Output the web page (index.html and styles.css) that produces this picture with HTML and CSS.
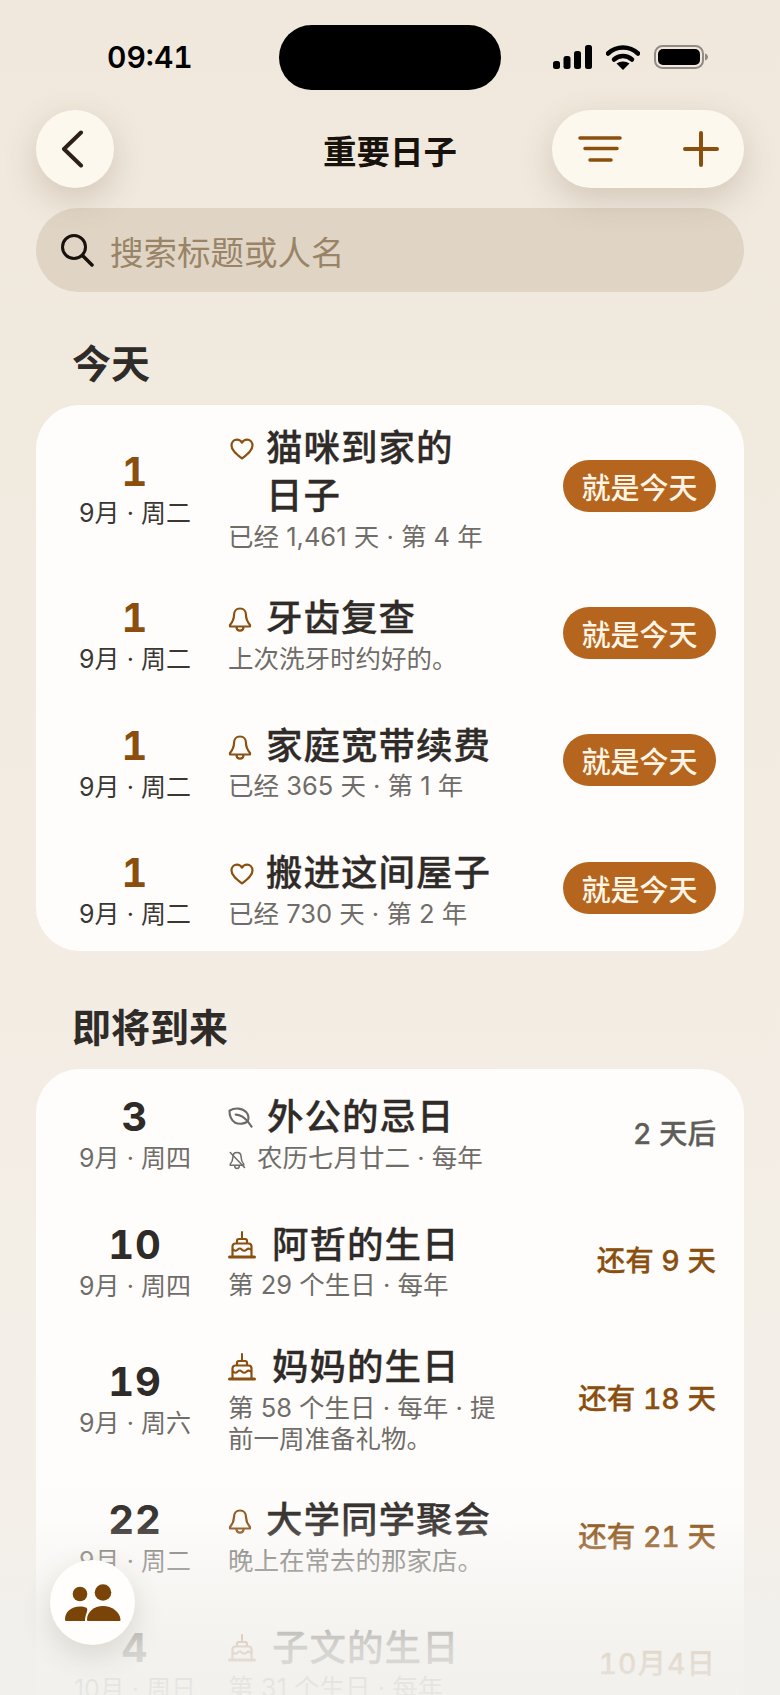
FILE: index.html
```html
<!DOCTYPE html>
<html lang="zh-CN">
<head>
    <meta charset="UTF-8">
    <meta name="viewport" content="width=device-width, initial-scale=1.0">
    <title>重要日子</title>
    <link rel="stylesheet" href="styles.css">
</head>
<body>
    <svg class="defs" width="0" height="0">
        <symbol id="i-heart" viewBox="0 0 24 22">
            <path d="M12 20.500C7 16.600 1.500 12.600 1.500 7.400 1.500 4 4 1.600 7 1.600c2.100 0 3.900 1.100 5 3 1.100-1.900 2.900-3 5-3 3 0 5.500 2.400 5.500 5.800 0 5.200-5.500 9.200-10.500 13.100Z" fill="none" stroke="currentColor" stroke-width="2.200" stroke-linejoin="round"/>
        </symbol>
        <symbol id="i-bell" viewBox="0 0 24 26">
            <path d="M12 2.500c-3.800 0-6 3-6 6.500 0 4.500-1.500 7-4 10v1.500h20V19c-2.500-3-4-5.500-4-10 0-3.500-2.200-6.500-6-6.500Z" fill="none" stroke="currentColor" stroke-width="2.200" stroke-linejoin="round"/>
            <path d="M8.500 21c0 2.200 1.500 3.600 3.500 3.600s3.500-1.400 3.500-3.600" fill="none" stroke="currentColor" stroke-width="2.200"/>
        </symbol>
        <symbol id="i-bell-off" viewBox="0 0 24 26">
            <path d="M12 3c-3.500 0-5.500 2.800-5.500 6.200 0 4.300-1.500 6.800-3.500 9.300v1.500h18v-1.500c-2-2.500-3.500-5-3.500-9.300C17.500 5.800 15.500 3 12 3Z" fill="none" stroke="currentColor" stroke-width="2" stroke-linejoin="round"/>
            <path d="M9 21c0 2 1.300 3.200 3 3.200s3-1.200 3-3.200M3 3l19 20" fill="none" stroke="currentColor" stroke-width="2" stroke-linecap="round"/>
        </symbol>
        <symbol id="i-leaf" viewBox="0 0 26 24">
            <path d="M1.500 5.500C7 2 15 2.500 19 7c2.500 3 2.800 6.500 1.500 9.500-3 2.500-8.500 3.500-13 1.500C3.500 15.500 1.500 10.500 1.500 5.500Z" fill="none" stroke="currentColor" stroke-width="2.200" stroke-linejoin="round"/>
            <path d="M8 9.500c4 0 8.500 2.500 12.500 7 1.500 2 2.800 3.700 4 5.500" fill="none" stroke="currentColor" stroke-width="2.200" stroke-linecap="round"/>
        </symbol>
        <symbol id="i-cake" viewBox="0 0 28 28">
            <path d="M14 1v6" stroke="currentColor" stroke-width="2" stroke-linecap="round"/>
            <path d="M9 12.500V10c0-1 .8-2 1.800-2h6.400c1 0 1.800 1 1.800 2v2.500M4.500 25V15.500c0-1.700 1.300-3 3-3h13c1.700 0 3 1.300 3 3V25" fill="none" stroke="currentColor" stroke-width="2.200"/>
            <path d="M4.500 18c2 2.200 3.500 2.200 5 .7s3-1.500 4.500 0 3 1.500 4.500 0 3-1.500 5 .3" fill="none" stroke="currentColor" stroke-width="2"/>
            <path d="M1.500 26h25" stroke="currentColor" stroke-width="3" stroke-linecap="round"/>
        </symbol>
    </svg>

    <div class="screen">
        <header class="status-bar">
            <span class="time">09:41</span>
            <div class="island"></div>
            <div class="status-icons">
                <svg width="39" height="24" viewBox="0 0 39 24">
                    <rect x="0" y="16" width="7" height="8" rx="2.500"/>
                    <rect x="10.500" y="11" width="7" height="13" rx="2.500"/>
                    <rect x="21" y="6" width="7" height="18" rx="2.500"/>
                    <rect x="32" y="0" width="7" height="24" rx="2.500"/>
                </svg>
                <svg width="34" height="25" viewBox="0 0 34 25">
                    <path d="M2 8.500C10.500 0.500 23.500 0.500 32 8.500" fill="none" stroke="#000" stroke-width="4.500" stroke-linecap="round"/>
                    <path d="M8 14.500c5.200-4.700 12.800-4.700 18 0" fill="none" stroke="#000" stroke-width="4.500" stroke-linecap="round"/>
                    <path d="M17 25l-6.500-6.500c3.800-2.800 9.200-2.800 13 0Z"/>
                </svg>
                <svg width="54" height="24" viewBox="0 0 54 24">
                    <rect x="1" y="1" width="48" height="22" rx="7.500" fill="none" stroke="#8f8c86" stroke-width="2"/>
                    <rect x="4" y="4" width="42" height="16" rx="5"/>
                    <path d="M51 8.500c2 .6 3 2 3 3.500s-1 2.900-3 3.500Z" fill="#8f8c86"/>
                </svg>
            </div>
        </header>

        <nav class="nav-bar">
            <button class="round-btn back-btn">
                <svg width="24" height="38" viewBox="0 0 24 38"><path d="M21 2.500 4 19l17 16.500" fill="none" stroke="#2b2118" stroke-width="4" stroke-linecap="round" stroke-linejoin="round"/></svg>
            </button>
            <h1 class="nav-title">重要日子</h1>
            <div class="round-btn nav-actions">
                <svg width="44" height="26" viewBox="0 0 44 26"><path d="M2 2h40M7 12.500h32M12 24h21" fill="none" stroke="#8a4f0f" stroke-width="3.500" stroke-linecap="round"/></svg>
                <svg width="36" height="36" viewBox="0 0 36 36"><path d="M18 2v32M2 18h32" fill="none" stroke="#8a4f0f" stroke-width="4" stroke-linecap="round"/></svg>
            </div>
        </nav>

        <div class="search-box">
            <svg width="34" height="34" viewBox="0 0 34 34"><circle cx="14" cy="14" r="11.500" fill="none" stroke="#17120c" stroke-width="3"/><path d="M22.500 22.500 32 32" stroke="#17120c" stroke-width="3.500" stroke-linecap="round"/></svg>
            <span class="search-text">搜索标题或人名</span>
        </div>

        <section class="section">
            <h2 class="section-title">今天</h2>
            <div class="card">
                <div class="row today">
                    <div class="date"><div class="day">1</div><div class="label">9月 · 周二</div></div>
                    <div class="main">
                        <div class="title"><svg class="icon heart"><use href="#i-heart"/></svg><span>猫咪到家的<br>日子</span></div>
                        <div class="sub">已经 1,461 天 · 第 4 年</div>
                    </div>
                    <div class="pill">就是今天</div>
                </div>
                <div class="row today">
                    <div class="date"><div class="day">1</div><div class="label">9月 · 周二</div></div>
                    <div class="main">
                        <div class="title"><svg class="icon bell"><use href="#i-bell"/></svg><span>牙齿复查</span></div>
                        <div class="sub">上次洗牙时约好的。</div>
                    </div>
                    <div class="pill">就是今天</div>
                </div>
                <div class="row today">
                    <div class="date"><div class="day">1</div><div class="label">9月 · 周二</div></div>
                    <div class="main">
                        <div class="title"><svg class="icon bell"><use href="#i-bell"/></svg><span>家庭宽带续费</span></div>
                        <div class="sub">已经 365 天 · 第 1 年</div>
                    </div>
                    <div class="pill">就是今天</div>
                </div>
                <div class="row today">
                    <div class="date"><div class="day">1</div><div class="label">9月 · 周二</div></div>
                    <div class="main">
                        <div class="title"><svg class="icon heart"><use href="#i-heart"/></svg><span>搬进这间屋子</span></div>
                        <div class="sub">已经 730 天 · 第 2 年</div>
                    </div>
                    <div class="pill">就是今天</div>
                </div>
            </div>
        </section>

        <section class="section">
            <h2 class="section-title">即将到来</h2>
            <div class="card">
                <div class="row">
                    <div class="date"><div class="day">3</div><div class="label">9月 · 周四</div></div>
                    <div class="main">
                        <div class="title"><svg class="icon leaf"><use href="#i-leaf"/></svg><span>外公的忌日</span></div>
                        <div class="sub"><svg class="icon-small"><use href="#i-bell-off"/></svg>农历七月廿二 · 每年</div>
                    </div>
                    <div class="count muted">2 天后</div>
                </div>
                <div class="row">
                    <div class="date"><div class="day">10</div><div class="label">9月 · 周四</div></div>
                    <div class="main">
                        <div class="title"><svg class="icon cake"><use href="#i-cake"/></svg><span>阿哲的生日</span></div>
                        <div class="sub">第 29 个生日 · 每年</div>
                    </div>
                    <div class="count">还有 9 天</div>
                </div>
                <div class="row">
                    <div class="date"><div class="day">19</div><div class="label">9月 · 周六</div></div>
                    <div class="main">
                        <div class="title"><svg class="icon cake"><use href="#i-cake"/></svg><span>妈妈的生日</span></div>
                        <div class="sub">第 58 个生日 · 每年 · 提前一周准备礼物。</div>
                    </div>
                    <div class="count">还有 18 天</div>
                </div>
                <div class="row">
                    <div class="date"><div class="day">22</div><div class="label">9月 · 周二</div></div>
                    <div class="main">
                        <div class="title"><svg class="icon bell"><use href="#i-bell"/></svg><span>大学同学聚会</span></div>
                        <div class="sub">晚上在常去的那家店。</div>
                    </div>
                    <div class="count">还有 21 天</div>
                </div>
                <div class="row">
                    <div class="date"><div class="day">4</div><div class="label">10月 · 周日</div></div>
                    <div class="main">
                        <div class="title"><svg class="icon cake"><use href="#i-cake"/></svg><span>子文的生日</span></div>
                        <div class="sub">第 31 个生日 · 每年</div>
                    </div>
                    <div class="count far">10月4日</div>
                </div>
            </div>
        </section>

        <div class="bottom-fade"></div>
        <button class="fab">
            <svg width="56" height="37" viewBox="0 0 56 37">
                <circle cx="15" cy="10" r="7.300" fill="#7a4408"/>
                <circle cx="38" cy="8.500" r="8.300" fill="#7a4408"/>
                <path d="M0 35.500C0 28 6 22.500 15 22.500c2.500 0 4.500.4 6.500 1.200C24 26 20 30 20 37H1.500C.5 37 0 36.500 0 35.500Z" fill="#7a4408"/>
                <path d="M22 35.500C22 28 29 22 38 22s17 6 17.500 13.500c0 1-.5 1.500-1.500 1.500H23.500c-1 0-1.500-.5-1.500-1.500Z" fill="#7a4408"/>
            </svg>
        </button>
    </div>
</body>
</html>
```

FILE: styles.css
```css
* {
    box-sizing: border-box;
}
body {
    margin: 0;
    font-family: Inter, "Noto Sans CJK SC", sans-serif;
    color: #2f2b28;
}
.defs {
    position: absolute;
}
.screen {
    position: relative;
    width: 780px;
    height: 1695px;
    padding: 24px 36px 0;
    overflow: hidden;
    background: linear-gradient(to bottom, #f0e8dc, #f2ebe1 40%, #f4f0ea);
}

/* status bar */
.status-bar {
    display: grid;
    grid-template-columns: 1fr 222px 1fr;
    align-items: center;
    height: 66px;
}
.time {
    padding-left: 71px;
    font-size: 30px;
    font-weight: 600;
    font-variant-numeric: tabular-nums;
    color: #000;
}
.island {
    height: 65px;
    border-radius: 33px;
    background: #000;
}
.status-icons {
    display: flex;
    align-items: center;
    gap: 14px;
    padding-left: 52px;
}

/* nav */
.nav-bar {
    display: grid;
    grid-template-columns: 192px 1fr 192px;
    align-items: center;
    margin-top: 20px;
}
.round-btn {
    height: 78px;
    border: none;
    border-radius: 39px;
    background: #fdf8ee;
    box-shadow: 0 12px 34px rgba(90, 70, 40, 0.2);
}
.back-btn {
    display: flex;
    align-items: center;
    justify-content: center;
    width: 78px;
    padding: 0 6px 0 0;
}
.nav-title {
    margin: 0;
    text-align: center;
    font-size: 33.5px;
    font-weight: 600;
    color: #17120c;
}
.nav-actions {
    display: flex;
    align-items: center;
    justify-content: space-between;
    padding: 0 25px 0 25.5px;
}

/* search */
.search-box {
    display: flex;
    align-items: center;
    gap: 16px;
    height: 84px;
    margin-top: 20px;
    padding: 0 24px;
    border-radius: 42px;
    background: #e0d5c5;
}
.search-text {
    font-size: 33.5px;
    color: #9a8468;
}

/* sections */
.section {
    margin-top: 48px;
}
.section + .section {
    margin-top: 53px;
}
.section-title {
    margin: 0 0 17px 36px;
    font-size: 39px;
    font-weight: 600;
    line-height: 48px;
}
.card {
    display: flex;
    flex-direction: column;
    gap: 37.5px;
    padding: 19px 28px 17px 24px;
    border-radius: 44px;
    background: #fffdfb;
}
.row {
    display: grid;
    grid-template-columns: 150px 1fr auto;
    column-gap: 18px;
    align-items: center;
    min-height: 90px;
}
.date {
    padding-top: 2px;
    text-align: center;
}
.day {
    font-size: 40px;
    font-weight: 700;
    line-height: 48px;
    letter-spacing: 1px;
    font-variant-numeric: tabular-nums;
}
.label {
    font-size: 25px;
    line-height: 34px;
    color: #6f6d6a;
}
.today .day {
    color: #8a4f0f;
}
.today .label {
    color: #3a3734;
}
.main {
    max-width: 285px;
}
.title {
    display: flex;
    align-items: flex-start;
    gap: 14px;
    font-size: 36.5px;
    font-weight: 500;
    line-height: 48px;
    letter-spacing: 1px;
    white-space: nowrap;
    -webkit-text-stroke: 0.3px currentColor;
}
.icon {
    flex: none;
    color: #8a5012;
    margin-top: 12px;
}
.heart {
    width: 24px;
    height: 22px;
    margin: 14px -1.5px 0 1.5px;
}
.bell {
    width: 24px;
    height: 26px;
}
.leaf {
    width: 25px;
    height: 24px;
    color: #6b6b68;
}
.cake {
    width: 28px;
    height: 28px;
    margin: 10px 2px 0 0;
}
.sub {
    margin-top: 0.5px;
    font-size: 25.5px;
    line-height: 31px;
    color: #6f6d6a;
}
.icon-small {
    width: 18px;
    height: 20px;
    margin-right: 11px;
    vertical-align: -3px;
    color: #6f6d6a;
}
.pill {
    display: flex;
    align-items: center;
    justify-content: center;
    width: 153px;
    height: 52px;
    margin-bottom: 3px;
    border-radius: 26px;
    background: #b5651d;
    color: #fff5e6;
    font-size: 29px;
    font-weight: 500;
}
.count {
    margin-bottom: 4px;
    font-size: 28.5px;
    font-weight: 500;
    font-variant-numeric: tabular-nums;
    -webkit-text-stroke: 0.3px currentColor;
    color: #8a4f0f;
    text-align: right;
}
.count.muted {
    color: #5f5d5a;
}
.count.far {
    letter-spacing: 1px;
}

/* bottom */
.bottom-fade {
    position: absolute;
    left: 0;
    right: 0;
    bottom: 0;
    height: 225px;
    background: linear-gradient(to bottom, rgba(241, 240, 237, 0), rgba(241, 240, 237, 0.06) 21%, rgba(241, 240, 237, 0.38) 40%, rgba(241, 240, 237, 0.85) 79%, rgba(241, 240, 237, 0.93));
}
.fab {
    position: absolute;
    left: 50px;
    top: 1560px;
    display: flex;
    align-items: center;
    justify-content: center;
    width: 85px;
    height: 85px;
    padding: 0;
    border: none;
    border-radius: 50%;
    background: #fffefc;
    box-shadow: 0 10px 30px rgba(90, 70, 40, 0.16);
}
```
